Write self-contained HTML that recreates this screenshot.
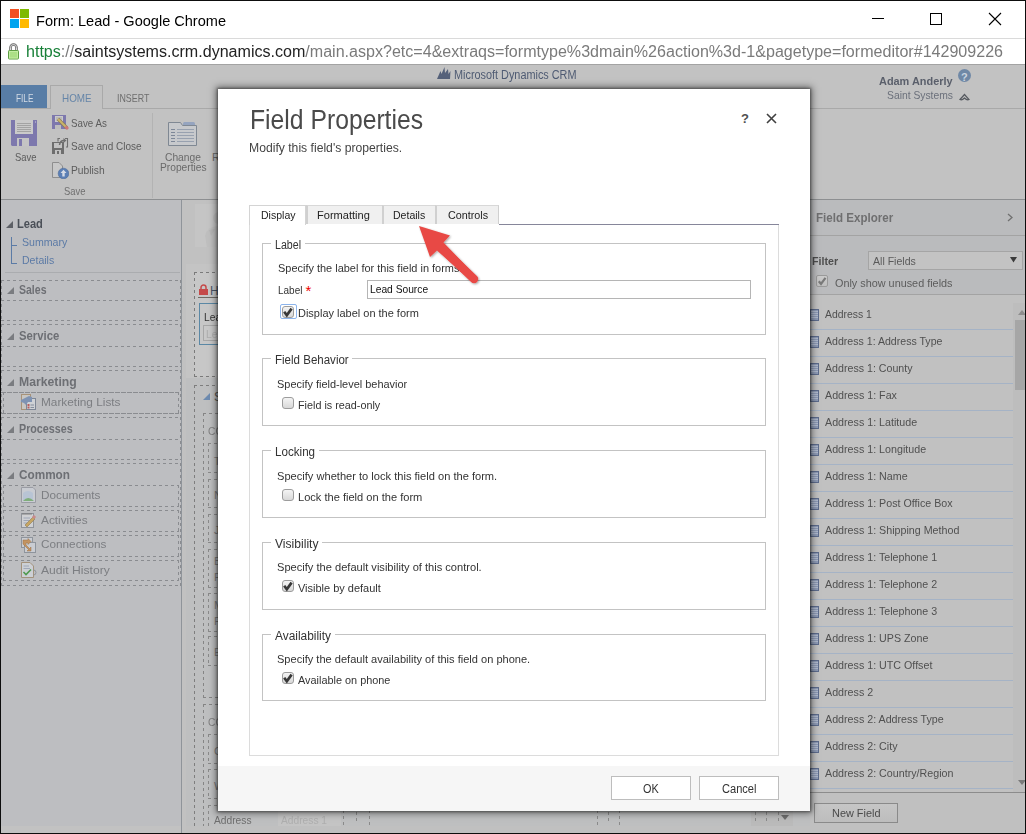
<!DOCTYPE html><html><head><meta charset="utf-8"><style>*{box-sizing:border-box;margin:0;padding:0}html,body{width:1026px;height:834px;overflow:hidden;background:#c2c2c2}body{position:relative;font-family:"Liberation Sans",sans-serif;color:#222}.a{position:absolute}.t{position:absolute;white-space:nowrap;line-height:1}.dl{position:absolute;left:0;top:0;z-index:10}</style></head><body>
<div class="a" style="left:0px;top:0px;width:1026px;height:38px;background:#fff"></div>
<div class="a" style="left:10px;top:9px;width:9px;height:9px;background:#f25022"></div>
<div class="a" style="left:20px;top:9px;width:9px;height:9px;background:#7fba00"></div>
<div class="a" style="left:10px;top:19px;width:9px;height:9px;background:#00a4ef"></div>
<div class="a" style="left:20px;top:19px;width:9px;height:9px;background:#ffb900"></div>
<div class="a" style="left:872px;top:18px;width:12px;height:1px;background:#000"></div>
<div class="a" style="left:930px;top:13px;width:12px;height:12px;border:1px solid #000"></div>
<svg class="a" style="left:988px;top:12px" width="14" height="14"><path d="M1 1L13 13M13 1L1 13" stroke="#000" stroke-width="1.1"/></svg>
<div class="a" style="left:0px;top:38px;width:1026px;height:1px;background:#dadada"></div>
<div class="a" style="left:0px;top:39px;width:1026px;height:25px;background:#fff"></div>
<div class="a" style="left:0px;top:64px;width:1026px;height:1px;background:#a3a3a3"></div>
<svg class="a" style="left:7px;top:43px" width="13" height="17" viewBox="0 0 13 17"><path d="M3.5 7.5V4.5A3 3 0 0 1 9.5 4.5V7.5" fill="none" stroke="#6a6a6a" stroke-width="2.6"/><path d="M3.5 7.5V4.5A3 3 0 0 1 9.5 4.5V7.5" fill="none" stroke="#e8e8e8" stroke-width="0.9"/><rect x="1.5" y="7.5" width="10" height="8.5" rx="0.8" fill="#acdf86" stroke="#5e9e44"/><rect x="2.5" y="8.5" width="8" height="6.5" fill="none" stroke="#c8f0a8" stroke-width="0.8"/></svg>
<div class="a" style="left:1px;top:65px;width:1024px;height:768px;background:#c2c2c2"></div>
<svg class="a" style="left:437px;top:66px" width="14" height="13" viewBox="0 0 14 13"><path d="M0 13 L3.5 5 L4.5 8 L7.5 1 L8 7 L11 3 L11.5 8 L13.5 5 L13 13 Z" fill="#55617a"/></svg>
<div class="a" style="left:958px;top:69px;width:13px;height:13px;border-radius:50%;background:#6f88a6"></div>
<svg class="a" style="left:959px;top:93px" width="11" height="8" viewBox="0 0 11 8"><path d="M1 6.5 L5.5 1.5 L10 6.5 Q8 7.5 5.5 5 Q3 7.5 1 6.5Z" fill="none" stroke="#55595f" stroke-width="1.2"/></svg>
<div class="a" style="left:1px;top:85px;width:46px;height:24px;background:#587da6"></div>
<div class="a" style="left:50px;top:85px;width:53px;height:24px;border:1px solid #a9a9a9;border-bottom:none;background:#c2c2c2;z-index:2"></div>
<div class="a" style="left:1px;top:108px;width:1024px;height:1px;background:#a9a9a9"></div>
<svg class="a" style="left:11px;top:120px" width="27" height="27" viewBox="0 0 27 27"><path d="M0 0H26V26H1L0 25Z" fill="#7d78ad"/><rect x="4" y="0" width="18" height="14" fill="#cacaca"/><path d="M6 3.5H20M6 5.5H20M6 7.5H20M6 9.5H20M6 11.5H20" stroke="#a3a3a3" stroke-width="1"/><rect x="6" y="18" width="12" height="8" fill="#c4c4c4"/><rect x="8" y="19" width="3" height="7" fill="#7d78ad"/><rect x="24" y="1" width="1" height="2" fill="#a7a3c8"/></svg>
<svg class="a" style="left:52px;top:115px" width="17" height="15" viewBox="0 0 17 15"><rect x="0" y="0" width="14" height="14" fill="#7d78ad"/><rect x="3" y="1" width="8" height="6" fill="#cacaca"/><path d="M4 3H10M4 5H10" stroke="#999" stroke-width="0.7"/><rect x="3" y="10" width="6" height="4" fill="#bdbdbd"/><path d="M6 4 L15 13" stroke="#8c7a55" stroke-width="3.2"/><path d="M6 4 L15 13" stroke="#c9b46a" stroke-width="2"/><path d="M13.5 11.5 L16 14" stroke="#c77" stroke-width="3"/></svg>
<svg class="a" style="left:52px;top:137px" width="17" height="18" viewBox="0 0 17 18"><rect x="0" y="5" width="12" height="12" fill="#6e6e6e"/><rect x="2" y="6" width="8" height="5" fill="#c2c2c2"/><rect x="3" y="13" width="6" height="4" fill="#c2c2c2"/><rect x="5" y="14" width="2" height="3" fill="#6e6e6e"/><path d="M6 4.5V1.5H8M13 1.5H15.5V10H14" fill="none" stroke="#6e6e6e" stroke-width="1.1"/><path d="M7.5 8 Q8 3.5 12 3.5" fill="none" stroke="#6e6e6e" stroke-width="1.5"/><path d="M11.5 1 L14.5 3.5 L11.5 6Z" fill="#6e6e6e"/></svg>
<svg class="a" style="left:52px;top:162px" width="17" height="17" viewBox="0 0 17 17"><path d="M0.5 0.5H7L10.5 4V15.5H0.5Z" fill="#c8c8c8" stroke="#8e8e8e"/><circle cx="11.5" cy="11.5" r="5.3" fill="#5b7fb5" stroke="#4a6a9a" stroke-width="0.6"/><path d="M11.5 7.8 L8.5 11 H10.3 V14.5 H12.7 V11 H14.5Z" fill="#d5dbe6"/></svg>
<div class="a" style="left:152px;top:113px;width:1px;height:85px;background:#b3b3b3"></div>
<svg class="a" style="left:167px;top:121px" width="31" height="26" viewBox="0 0 31 26"><rect x="16" y="1" width="12" height="4" rx="1.5" fill="#95a4bf"/><path d="M1.5 1.5 H13.5 L15.5 4.5 H29.5 V24.5 H1.5 Z" fill="#c7c9cc" stroke="#7f8893" stroke-width="1"/><g stroke="#7d8797" stroke-width="1.1"><path d="M4 8.5H8M4 11.5H8M4 14.5H8M4 17.5H8M4 20.5H8"/></g><g stroke="#939cab" stroke-width="0.9"><path d="M10 8.5H27M10 11.5H27M10 14.5H27M10 17.5H27M10 20.5H27"/></g></svg>
<div class="a" style="left:1px;top:199px;width:1024px;height:1px;background:#8d8f91"></div>
<div class="a" style="left:182px;top:200px;width:628px;height:633px;background:#c1c1c1"></div>
<div class="a" style="left:195px;top:204px;width:30px;height:43px;background:#c5c5c5"></div>
<svg class="a" style="left:195px;top:204px" width="30" height="43"><circle cx="24" cy="14" r="6" fill="#bcbcbc"/><path d="M10 32 Q12 22 24 22 Q30 22 30 26 V43 H12Z" fill="#bfbfbf"/><path d="M14 26 L20 25 L16 32Z" fill="#b8b8b8"/></svg>
<div class="a" style="left:186px;top:264px;width:624px;height:114px;background:#c4c4c4"></div>
<div class="a" style="left:194px;top:272px;width:620px;height:104px;background:#c7c7c7"></div>
<div class="a" style="left:194px;top:272px;width:620px;height:1px;background:repeating-linear-gradient(90deg,#7a7a7a 0 3px,transparent 3px 6px)"></div>
<div class="a" style="left:194px;top:376px;width:620px;height:1px;background:repeating-linear-gradient(90deg,#7a7a7a 0 3px,transparent 3px 6px)"></div>
<div class="a" style="left:194px;top:272px;width:1px;height:105px;background:repeating-linear-gradient(180deg,#7a7a7a 0 3px,transparent 3px 6px)"></div>
<svg class="a" style="left:199px;top:284px" width="9" height="11" viewBox="0 0 9 11"><path d="M2 5V3.5A2.5 2.5 0 0 1 7 3.5V5" fill="none" stroke="#c54a4a" stroke-width="1.5"/><rect x="0" y="5" width="9" height="6" fill="#c54a4a"/></svg>
<div class="a" style="left:198px;top:297px;width:620px;height:1px;background:#6e6b64"></div>
<div class="a" style="left:199px;top:303px;width:620px;height:42px;border:1px solid #5b88a5"></div>
<div class="a" style="left:203px;top:325px;width:600px;height:16px;border:1px solid #a7a7a7;background:#c8c8c8"></div>
<div class="a" style="left:186px;top:378px;width:624px;height:448px;background:#bebfc0"></div>
<div class="a" style="left:194px;top:385px;width:620px;height:1px;background:repeating-linear-gradient(90deg,#7e7e7e 0 3px,transparent 3px 6px)"></div>
<div class="a" style="left:194px;top:385px;width:1px;height:441px;background:repeating-linear-gradient(180deg,#7e7e7e 0 3px,transparent 3px 6px)"></div>
<svg class="a" style="left:203px;top:393px" width="7" height="7"><path d="M0 7H7V0Z" fill="#6d8bb0"/></svg>
<div class="a" style="left:203px;top:413px;width:620px;height:1px;background:repeating-linear-gradient(90deg,#858585 0 3px,transparent 3px 6px)"></div>
<div class="a" style="left:203px;top:697px;width:620px;height:1px;background:repeating-linear-gradient(90deg,#858585 0 3px,transparent 3px 6px)"></div>
<div class="a" style="left:203px;top:413px;width:1px;height:285px;background:repeating-linear-gradient(180deg,#858585 0 3px,transparent 3px 6px)"></div>
<div class="a" style="left:203px;top:704px;width:620px;height:1px;background:repeating-linear-gradient(90deg,#858585 0 3px,transparent 3px 6px)"></div>
<div class="a" style="left:203px;top:704px;width:1px;height:122px;background:repeating-linear-gradient(180deg,#858585 0 3px,transparent 3px 6px)"></div>
<div class="a" style="left:186px;top:826px;width:624px;height:7px;background:#c0c0c0"></div>
<div class="a" style="left:208px;top:443px;width:600px;height:1px;background:repeating-linear-gradient(90deg,#8a8a8a 0 3px,transparent 3px 6px)"></div>
<div class="a" style="left:208px;top:472px;width:600px;height:1px;background:repeating-linear-gradient(90deg,#8a8a8a 0 3px,transparent 3px 6px)"></div>
<div class="a" style="left:208px;top:443px;width:1px;height:30px;background:repeating-linear-gradient(180deg,#8a8a8a 0 3px,transparent 3px 6px)"></div>
<div class="a" style="left:807px;top:443px;width:1px;height:30px;background:repeating-linear-gradient(180deg,#8a8a8a 0 3px,transparent 3px 6px)"></div>
<div class="a" style="left:208px;top:479px;width:600px;height:1px;background:repeating-linear-gradient(90deg,#8a8a8a 0 3px,transparent 3px 6px)"></div>
<div class="a" style="left:208px;top:507px;width:600px;height:1px;background:repeating-linear-gradient(90deg,#8a8a8a 0 3px,transparent 3px 6px)"></div>
<div class="a" style="left:208px;top:479px;width:1px;height:29px;background:repeating-linear-gradient(180deg,#8a8a8a 0 3px,transparent 3px 6px)"></div>
<div class="a" style="left:807px;top:479px;width:1px;height:29px;background:repeating-linear-gradient(180deg,#8a8a8a 0 3px,transparent 3px 6px)"></div>
<div class="a" style="left:208px;top:514px;width:600px;height:1px;background:repeating-linear-gradient(90deg,#8a8a8a 0 3px,transparent 3px 6px)"></div>
<div class="a" style="left:208px;top:542px;width:600px;height:1px;background:repeating-linear-gradient(90deg,#8a8a8a 0 3px,transparent 3px 6px)"></div>
<div class="a" style="left:208px;top:514px;width:1px;height:29px;background:repeating-linear-gradient(180deg,#8a8a8a 0 3px,transparent 3px 6px)"></div>
<div class="a" style="left:807px;top:514px;width:1px;height:29px;background:repeating-linear-gradient(180deg,#8a8a8a 0 3px,transparent 3px 6px)"></div>
<div class="a" style="left:208px;top:549px;width:600px;height:1px;background:repeating-linear-gradient(90deg,#8a8a8a 0 3px,transparent 3px 6px)"></div>
<div class="a" style="left:208px;top:587px;width:600px;height:1px;background:repeating-linear-gradient(90deg,#8a8a8a 0 3px,transparent 3px 6px)"></div>
<div class="a" style="left:208px;top:549px;width:1px;height:39px;background:repeating-linear-gradient(180deg,#8a8a8a 0 3px,transparent 3px 6px)"></div>
<div class="a" style="left:807px;top:549px;width:1px;height:39px;background:repeating-linear-gradient(180deg,#8a8a8a 0 3px,transparent 3px 6px)"></div>
<div class="a" style="left:208px;top:593px;width:600px;height:1px;background:repeating-linear-gradient(90deg,#8a8a8a 0 3px,transparent 3px 6px)"></div>
<div class="a" style="left:208px;top:631px;width:600px;height:1px;background:repeating-linear-gradient(90deg,#8a8a8a 0 3px,transparent 3px 6px)"></div>
<div class="a" style="left:208px;top:593px;width:1px;height:39px;background:repeating-linear-gradient(180deg,#8a8a8a 0 3px,transparent 3px 6px)"></div>
<div class="a" style="left:807px;top:593px;width:1px;height:39px;background:repeating-linear-gradient(180deg,#8a8a8a 0 3px,transparent 3px 6px)"></div>
<div class="a" style="left:208px;top:636px;width:600px;height:1px;background:repeating-linear-gradient(90deg,#8a8a8a 0 3px,transparent 3px 6px)"></div>
<div class="a" style="left:208px;top:665px;width:600px;height:1px;background:repeating-linear-gradient(90deg,#8a8a8a 0 3px,transparent 3px 6px)"></div>
<div class="a" style="left:208px;top:636px;width:1px;height:30px;background:repeating-linear-gradient(180deg,#8a8a8a 0 3px,transparent 3px 6px)"></div>
<div class="a" style="left:807px;top:636px;width:1px;height:30px;background:repeating-linear-gradient(180deg,#8a8a8a 0 3px,transparent 3px 6px)"></div>
<div class="a" style="left:208px;top:734px;width:600px;height:1px;background:repeating-linear-gradient(90deg,#8a8a8a 0 3px,transparent 3px 6px)"></div>
<div class="a" style="left:208px;top:763px;width:600px;height:1px;background:repeating-linear-gradient(90deg,#8a8a8a 0 3px,transparent 3px 6px)"></div>
<div class="a" style="left:208px;top:734px;width:1px;height:30px;background:repeating-linear-gradient(180deg,#8a8a8a 0 3px,transparent 3px 6px)"></div>
<div class="a" style="left:807px;top:734px;width:1px;height:30px;background:repeating-linear-gradient(180deg,#8a8a8a 0 3px,transparent 3px 6px)"></div>
<div class="a" style="left:208px;top:769px;width:600px;height:1px;background:repeating-linear-gradient(90deg,#8a8a8a 0 3px,transparent 3px 6px)"></div>
<div class="a" style="left:208px;top:798px;width:600px;height:1px;background:repeating-linear-gradient(90deg,#8a8a8a 0 3px,transparent 3px 6px)"></div>
<div class="a" style="left:208px;top:769px;width:1px;height:30px;background:repeating-linear-gradient(180deg,#8a8a8a 0 3px,transparent 3px 6px)"></div>
<div class="a" style="left:807px;top:769px;width:1px;height:30px;background:repeating-linear-gradient(180deg,#8a8a8a 0 3px,transparent 3px 6px)"></div>
<div class="a" style="left:208px;top:805px;width:600px;height:1px;background:repeating-linear-gradient(90deg,#8a8a8a 0 3px,transparent 3px 6px)"></div>
<div class="a" style="left:208px;top:805px;width:1px;height:22px;background:repeating-linear-gradient(180deg,#8a8a8a 0 3px,transparent 3px 6px)"></div>
<div class="a" style="left:278px;top:810px;width:63px;height:16px;background:#c4c4c4"></div>
<div class="a" style="left:343px;top:810px;width:1px;height:16px;background:repeating-linear-gradient(180deg,#8a8a8a 0 3px,transparent 3px 6px)"></div>
<div class="a" style="left:356px;top:812px;width:1px;height:12px;background:repeating-linear-gradient(180deg,#8a8a8a 0 3px,transparent 3px 6px)"></div>
<div class="a" style="left:369px;top:810px;width:1px;height:16px;background:repeating-linear-gradient(180deg,#8a8a8a 0 3px,transparent 3px 6px)"></div>
<div class="a" style="left:597px;top:810px;width:1px;height:16px;background:repeating-linear-gradient(180deg,#8a8a8a 0 3px,transparent 3px 6px)"></div>
<div class="a" style="left:608px;top:812px;width:1px;height:12px;background:repeating-linear-gradient(180deg,#8a8a8a 0 3px,transparent 3px 6px)"></div>
<div class="a" style="left:619px;top:810px;width:1px;height:16px;background:repeating-linear-gradient(180deg,#8a8a8a 0 3px,transparent 3px 6px)"></div>
<div class="a" style="left:751px;top:810px;width:42px;height:16px;background:#bababa"></div>
<div class="a" style="left:755px;top:812px;width:1px;height:12px;background:repeating-linear-gradient(180deg,#8a8a8a 0 3px,transparent 3px 6px)"></div>
<div class="a" style="left:766px;top:812px;width:1px;height:12px;background:repeating-linear-gradient(180deg,#8a8a8a 0 3px,transparent 3px 6px)"></div>
<div class="a" style="left:778px;top:812px;width:1px;height:12px;background:repeating-linear-gradient(180deg,#8a8a8a 0 3px,transparent 3px 6px)"></div>
<svg class="a" style="left:781px;top:815px" width="8" height="5"><path d="M0 0H8L4 5Z" fill="#6e6e6e"/></svg>
<div class="a" style="left:810px;top:200px;width:215px;height:633px;background:#babbbd"></div>
<svg class="a" style="left:1007px;top:213px" width="6" height="9"><path d="M1 1L5 4.5L1 8" fill="none" stroke="#707070" stroke-width="1.3"/></svg>
<div class="a" style="left:810px;top:235px;width:215px;height:1px;background:#a3a3a3"></div>
<div class="a" style="left:868px;top:251px;width:155px;height:19px;border:1px solid #a5a5a5;background:#c3c3c3"></div>
<svg class="a" style="left:1010px;top:257px" width="7" height="6"><path d="M0 0H7L3.5 5.5Z" fill="#3a3a3a"/></svg>
<div class="a" style="left:816px;top:275px;width:12px;height:12px;border:1px solid #9a9a9a;border-radius:2px;background:linear-gradient(#cbcbcb,#bfbfbf)"></div>
<svg class="a" style="left:817px;top:276px" width="10" height="10"><path d="M1.8 5.2L4 8L8.5 1.8" fill="none" stroke="#7a7a7a" stroke-width="2.2"/></svg>
<div class="a" style="left:810px;top:294px;width:215px;height:1px;background:#a3a3a3"></div>
<div class="a" style="left:810px;top:295px;width:215px;height:497px;background:#c1c1c1"></div>
<div class="a" style="left:1013px;top:303px;width:12px;height:489px;background:#bdbdbd"></div>
<div class="a" style="left:1015px;top:320px;width:10px;height:70px;background:#a6a6a6"></div>
<svg class="a" style="left:1018px;top:310px" width="8" height="5"><path d="M0 5H8L4 0Z" fill="#8e8e8e"/></svg>
<svg class="a" style="left:1018px;top:780px" width="8" height="5"><path d="M0 0H8L4 5Z" fill="#7a7a7a"/></svg>
<div class="a" style="left:810px;top:793px;width:215px;height:40px;background:#c0c0c0"></div>
<div class="a" style="left:810px;top:792px;width:215px;height:1px;background:#8c8c8c"></div>
<div class="a" style="left:814px;top:803px;width:84px;height:20px;border:1px solid #8a8a8a;background:linear-gradient(#c6c6c6,#bdbdbd)"></div>
<svg class="a" style="left:810px;top:309px" width="9" height="12" viewBox="0 0 9 12"><rect x="0.5" y="0.5" width="8" height="11" fill="#8e9bb6" stroke="#5d6c8d"/><path d="M1 2.5H8M1 4.5H8M1 6.5H8M1 8.5H8" stroke="#b0bace" stroke-width="1"/></svg>
<div class="a" style="left:810px;top:329.2px;width:203px;height:1px;background:#a5b3c6"></div>
<svg class="a" style="left:810px;top:336px" width="9" height="12" viewBox="0 0 9 12"><rect x="0.5" y="0.5" width="8" height="11" fill="#8e9bb6" stroke="#5d6c8d"/><path d="M1 2.5H8M1 4.5H8M1 6.5H8M1 8.5H8" stroke="#b0bace" stroke-width="1"/></svg>
<div class="a" style="left:810px;top:356.2px;width:203px;height:1px;background:#a5b3c6"></div>
<svg class="a" style="left:810px;top:363px" width="9" height="12" viewBox="0 0 9 12"><rect x="0.5" y="0.5" width="8" height="11" fill="#8e9bb6" stroke="#5d6c8d"/><path d="M1 2.5H8M1 4.5H8M1 6.5H8M1 8.5H8" stroke="#b0bace" stroke-width="1"/></svg>
<div class="a" style="left:810px;top:383.2px;width:203px;height:1px;background:#a5b3c6"></div>
<svg class="a" style="left:810px;top:390px" width="9" height="12" viewBox="0 0 9 12"><rect x="0.5" y="0.5" width="8" height="11" fill="#8e9bb6" stroke="#5d6c8d"/><path d="M1 2.5H8M1 4.5H8M1 6.5H8M1 8.5H8" stroke="#b0bace" stroke-width="1"/></svg>
<div class="a" style="left:810px;top:410.2px;width:203px;height:1px;background:#a5b3c6"></div>
<svg class="a" style="left:810px;top:417px" width="9" height="12" viewBox="0 0 9 12"><rect x="0.5" y="0.5" width="8" height="11" fill="#8e9bb6" stroke="#5d6c8d"/><path d="M1 2.5H8M1 4.5H8M1 6.5H8M1 8.5H8" stroke="#b0bace" stroke-width="1"/></svg>
<div class="a" style="left:810px;top:437.2px;width:203px;height:1px;background:#a5b3c6"></div>
<svg class="a" style="left:810px;top:444px" width="9" height="12" viewBox="0 0 9 12"><rect x="0.5" y="0.5" width="8" height="11" fill="#8e9bb6" stroke="#5d6c8d"/><path d="M1 2.5H8M1 4.5H8M1 6.5H8M1 8.5H8" stroke="#b0bace" stroke-width="1"/></svg>
<div class="a" style="left:810px;top:464.2px;width:203px;height:1px;background:#a5b3c6"></div>
<svg class="a" style="left:810px;top:471px" width="9" height="12" viewBox="0 0 9 12"><rect x="0.5" y="0.5" width="8" height="11" fill="#8e9bb6" stroke="#5d6c8d"/><path d="M1 2.5H8M1 4.5H8M1 6.5H8M1 8.5H8" stroke="#b0bace" stroke-width="1"/></svg>
<div class="a" style="left:810px;top:491.2px;width:203px;height:1px;background:#a5b3c6"></div>
<svg class="a" style="left:810px;top:498px" width="9" height="12" viewBox="0 0 9 12"><rect x="0.5" y="0.5" width="8" height="11" fill="#8e9bb6" stroke="#5d6c8d"/><path d="M1 2.5H8M1 4.5H8M1 6.5H8M1 8.5H8" stroke="#b0bace" stroke-width="1"/></svg>
<div class="a" style="left:810px;top:518.2px;width:203px;height:1px;background:#a5b3c6"></div>
<svg class="a" style="left:810px;top:525px" width="9" height="12" viewBox="0 0 9 12"><rect x="0.5" y="0.5" width="8" height="11" fill="#8e9bb6" stroke="#5d6c8d"/><path d="M1 2.5H8M1 4.5H8M1 6.5H8M1 8.5H8" stroke="#b0bace" stroke-width="1"/></svg>
<div class="a" style="left:810px;top:545.2px;width:203px;height:1px;background:#a5b3c6"></div>
<svg class="a" style="left:810px;top:552px" width="9" height="12" viewBox="0 0 9 12"><rect x="0.5" y="0.5" width="8" height="11" fill="#8e9bb6" stroke="#5d6c8d"/><path d="M1 2.5H8M1 4.5H8M1 6.5H8M1 8.5H8" stroke="#b0bace" stroke-width="1"/></svg>
<div class="a" style="left:810px;top:572.2px;width:203px;height:1px;background:#a5b3c6"></div>
<svg class="a" style="left:810px;top:579px" width="9" height="12" viewBox="0 0 9 12"><rect x="0.5" y="0.5" width="8" height="11" fill="#8e9bb6" stroke="#5d6c8d"/><path d="M1 2.5H8M1 4.5H8M1 6.5H8M1 8.5H8" stroke="#b0bace" stroke-width="1"/></svg>
<div class="a" style="left:810px;top:599.2px;width:203px;height:1px;background:#a5b3c6"></div>
<svg class="a" style="left:810px;top:606px" width="9" height="12" viewBox="0 0 9 12"><rect x="0.5" y="0.5" width="8" height="11" fill="#8e9bb6" stroke="#5d6c8d"/><path d="M1 2.5H8M1 4.5H8M1 6.5H8M1 8.5H8" stroke="#b0bace" stroke-width="1"/></svg>
<div class="a" style="left:810px;top:626.2px;width:203px;height:1px;background:#a5b3c6"></div>
<svg class="a" style="left:810px;top:633px" width="9" height="12" viewBox="0 0 9 12"><rect x="0.5" y="0.5" width="8" height="11" fill="#8e9bb6" stroke="#5d6c8d"/><path d="M1 2.5H8M1 4.5H8M1 6.5H8M1 8.5H8" stroke="#b0bace" stroke-width="1"/></svg>
<div class="a" style="left:810px;top:653.2px;width:203px;height:1px;background:#a5b3c6"></div>
<svg class="a" style="left:810px;top:660px" width="9" height="12" viewBox="0 0 9 12"><rect x="0.5" y="0.5" width="8" height="11" fill="#8e9bb6" stroke="#5d6c8d"/><path d="M1 2.5H8M1 4.5H8M1 6.5H8M1 8.5H8" stroke="#b0bace" stroke-width="1"/></svg>
<div class="a" style="left:810px;top:680.2px;width:203px;height:1px;background:#a5b3c6"></div>
<svg class="a" style="left:810px;top:687px" width="9" height="12" viewBox="0 0 9 12"><rect x="0.5" y="0.5" width="8" height="11" fill="#8e9bb6" stroke="#5d6c8d"/><path d="M1 2.5H8M1 4.5H8M1 6.5H8M1 8.5H8" stroke="#b0bace" stroke-width="1"/></svg>
<div class="a" style="left:810px;top:707.2px;width:203px;height:1px;background:#a5b3c6"></div>
<svg class="a" style="left:810px;top:714px" width="9" height="12" viewBox="0 0 9 12"><rect x="0.5" y="0.5" width="8" height="11" fill="#8e9bb6" stroke="#5d6c8d"/><path d="M1 2.5H8M1 4.5H8M1 6.5H8M1 8.5H8" stroke="#b0bace" stroke-width="1"/></svg>
<div class="a" style="left:810px;top:734.2px;width:203px;height:1px;background:#a5b3c6"></div>
<svg class="a" style="left:810px;top:741px" width="9" height="12" viewBox="0 0 9 12"><rect x="0.5" y="0.5" width="8" height="11" fill="#8e9bb6" stroke="#5d6c8d"/><path d="M1 2.5H8M1 4.5H8M1 6.5H8M1 8.5H8" stroke="#b0bace" stroke-width="1"/></svg>
<div class="a" style="left:810px;top:761.2px;width:203px;height:1px;background:#a5b3c6"></div>
<svg class="a" style="left:810px;top:768px" width="9" height="12" viewBox="0 0 9 12"><rect x="0.5" y="0.5" width="8" height="11" fill="#8e9bb6" stroke="#5d6c8d"/><path d="M1 2.5H8M1 4.5H8M1 6.5H8M1 8.5H8" stroke="#b0bace" stroke-width="1"/></svg>
<div class="a" style="left:810px;top:788.2px;width:203px;height:1px;background:#a5b3c6"></div>
<div class="a" style="left:1px;top:200px;width:181px;height:626px;background:#bdbec1"></div>
<div class="a" style="left:181px;top:200px;width:1px;height:633px;background:#8f949a"></div>
<svg class="a" style="left:6px;top:221px" width="7" height="7"><path d="M0 7H7V0Z" fill="#5d6066"/></svg>
<div class="a" style="left:11px;top:237px;width:1px;height:27px;background:#5b7ba6"></div>
<div class="a" style="left:11px;top:245px;width:6px;height:1px;background:#5b7ba6"></div>
<div class="a" style="left:11px;top:263px;width:6px;height:1px;background:#5b7ba6"></div>
<div class="a" style="left:5px;top:272px;width:175px;height:1px;background:#aaacaf"></div>
<div class="a" style="left:1px;top:280px;width:180px;height:1px;background:repeating-linear-gradient(90deg,#8a8c90 0 3px,transparent 3px 6px)"></div>
<div class="a" style="left:1px;top:320px;width:180px;height:1px;background:repeating-linear-gradient(90deg,#8a8c90 0 3px,transparent 3px 6px)"></div>
<div class="a" style="left:1px;top:280px;width:1px;height:41px;background:repeating-linear-gradient(180deg,#8a8c90 0 3px,transparent 3px 6px)"></div>
<div class="a" style="left:180px;top:280px;width:1px;height:41px;background:repeating-linear-gradient(180deg,#8a8c90 0 3px,transparent 3px 6px)"></div>
<div class="a" style="left:1px;top:300px;width:180px;height:1px;background:repeating-linear-gradient(90deg,#8a8c90 0 3px,transparent 3px 6px)"></div>
<svg class="a" style="left:7px;top:287px" width="7" height="7"><path d="M0 7H7V0Z" fill="#7a7c80"/></svg>
<div class="a" style="left:1px;top:324px;width:180px;height:1px;background:repeating-linear-gradient(90deg,#8a8c90 0 3px,transparent 3px 6px)"></div>
<div class="a" style="left:1px;top:366px;width:180px;height:1px;background:repeating-linear-gradient(90deg,#8a8c90 0 3px,transparent 3px 6px)"></div>
<div class="a" style="left:1px;top:324px;width:1px;height:43px;background:repeating-linear-gradient(180deg,#8a8c90 0 3px,transparent 3px 6px)"></div>
<div class="a" style="left:180px;top:324px;width:1px;height:43px;background:repeating-linear-gradient(180deg,#8a8c90 0 3px,transparent 3px 6px)"></div>
<div class="a" style="left:1px;top:346px;width:180px;height:1px;background:repeating-linear-gradient(90deg,#8a8c90 0 3px,transparent 3px 6px)"></div>
<svg class="a" style="left:7px;top:333px" width="7" height="7"><path d="M0 7H7V0Z" fill="#7a7c80"/></svg>
<div class="a" style="left:1px;top:370px;width:180px;height:1px;background:repeating-linear-gradient(90deg,#8a8c90 0 3px,transparent 3px 6px)"></div>
<div class="a" style="left:1px;top:413px;width:180px;height:1px;background:repeating-linear-gradient(90deg,#8a8c90 0 3px,transparent 3px 6px)"></div>
<div class="a" style="left:1px;top:370px;width:1px;height:44px;background:repeating-linear-gradient(180deg,#8a8c90 0 3px,transparent 3px 6px)"></div>
<div class="a" style="left:180px;top:370px;width:1px;height:44px;background:repeating-linear-gradient(180deg,#8a8c90 0 3px,transparent 3px 6px)"></div>
<div class="a" style="left:1px;top:392px;width:180px;height:1px;background:repeating-linear-gradient(90deg,#8a8c90 0 3px,transparent 3px 6px)"></div>
<svg class="a" style="left:7px;top:379px" width="7" height="7"><path d="M0 7H7V0Z" fill="#7a7c80"/></svg>
<div class="a" style="left:3px;top:392px;width:176px;height:1px;background:repeating-linear-gradient(90deg,#8a8c90 0 3px,transparent 3px 6px)"></div>
<div class="a" style="left:3px;top:413px;width:176px;height:1px;background:repeating-linear-gradient(90deg,#8a8c90 0 3px,transparent 3px 6px)"></div>
<div class="a" style="left:3px;top:392px;width:1px;height:22px;background:repeating-linear-gradient(180deg,#8a8c90 0 3px,transparent 3px 6px)"></div>
<div class="a" style="left:178px;top:392px;width:1px;height:22px;background:repeating-linear-gradient(180deg,#8a8c90 0 3px,transparent 3px 6px)"></div>
<svg class="a" style="left:20px;top:394px" width="17" height="16" viewBox="0 0 17 16"><rect x="1.5" y="0.5" width="9" height="15" fill="#c8c6c2" stroke="#a89278"/><rect x="6.5" y="4.5" width="9" height="11" fill="#cfd2d6" stroke="#7e8796"/><path d="M1 6 L9 2 L12 3 L12 8 L8 8 L6 11 L4 9 L1 8Z" fill="#7f93b3"/><rect x="7.5" y="10" width="2" height="2" fill="#b85c5c"/><rect x="7.5" y="12.5" width="2" height="2" fill="#b85c5c"/><path d="M10.5 11H14M10.5 13.5H14" stroke="#7e8796" stroke-width="0.9"/></svg>
<div class="a" style="left:1px;top:417px;width:180px;height:1px;background:repeating-linear-gradient(90deg,#8a8c90 0 3px,transparent 3px 6px)"></div>
<div class="a" style="left:1px;top:459px;width:180px;height:1px;background:repeating-linear-gradient(90deg,#8a8c90 0 3px,transparent 3px 6px)"></div>
<div class="a" style="left:1px;top:417px;width:1px;height:43px;background:repeating-linear-gradient(180deg,#8a8c90 0 3px,transparent 3px 6px)"></div>
<div class="a" style="left:180px;top:417px;width:1px;height:43px;background:repeating-linear-gradient(180deg,#8a8c90 0 3px,transparent 3px 6px)"></div>
<div class="a" style="left:1px;top:439px;width:180px;height:1px;background:repeating-linear-gradient(90deg,#8a8c90 0 3px,transparent 3px 6px)"></div>
<svg class="a" style="left:7px;top:426px" width="7" height="7"><path d="M0 7H7V0Z" fill="#7a7c80"/></svg>
<div class="a" style="left:1px;top:463px;width:180px;height:1px;background:repeating-linear-gradient(90deg,#8a8c90 0 3px,transparent 3px 6px)"></div>
<div class="a" style="left:1px;top:585px;width:180px;height:1px;background:repeating-linear-gradient(90deg,#8a8c90 0 3px,transparent 3px 6px)"></div>
<div class="a" style="left:1px;top:463px;width:1px;height:123px;background:repeating-linear-gradient(180deg,#8a8c90 0 3px,transparent 3px 6px)"></div>
<div class="a" style="left:180px;top:463px;width:1px;height:123px;background:repeating-linear-gradient(180deg,#8a8c90 0 3px,transparent 3px 6px)"></div>
<svg class="a" style="left:7px;top:472px" width="7" height="7"><path d="M0 7H7V0Z" fill="#7a7c80"/></svg>
<div class="a" style="left:3px;top:485px;width:176px;height:1px;background:repeating-linear-gradient(90deg,#8a8c90 0 3px,transparent 3px 6px)"></div>
<div class="a" style="left:3px;top:506px;width:176px;height:1px;background:repeating-linear-gradient(90deg,#8a8c90 0 3px,transparent 3px 6px)"></div>
<div class="a" style="left:3px;top:485px;width:1px;height:22px;background:repeating-linear-gradient(180deg,#8a8c90 0 3px,transparent 3px 6px)"></div>
<div class="a" style="left:178px;top:485px;width:1px;height:22px;background:repeating-linear-gradient(180deg,#8a8c90 0 3px,transparent 3px 6px)"></div>
<svg class="a" style="left:20px;top:487px" width="17" height="16" viewBox="0 0 17 16"><path d="M1.5 0.5H13L15.5 3V15.5H1.5Z" fill="#c9ccd2" stroke="#9a9ca4"/><path d="M3 6 Q8 2 13 6 V14 H3Z" fill="#b8c4d4"/><path d="M3 14 Q8 8 14 14Z" fill="#7fae7a"/></svg>
<div class="a" style="left:3px;top:510px;width:176px;height:1px;background:repeating-linear-gradient(90deg,#8a8c90 0 3px,transparent 3px 6px)"></div>
<div class="a" style="left:3px;top:531px;width:176px;height:1px;background:repeating-linear-gradient(90deg,#8a8c90 0 3px,transparent 3px 6px)"></div>
<div class="a" style="left:3px;top:510px;width:1px;height:22px;background:repeating-linear-gradient(180deg,#8a8c90 0 3px,transparent 3px 6px)"></div>
<div class="a" style="left:178px;top:510px;width:1px;height:22px;background:repeating-linear-gradient(180deg,#8a8c90 0 3px,transparent 3px 6px)"></div>
<svg class="a" style="left:20px;top:512.2px" width="17" height="16" viewBox="0 0 17 16"><rect x="1.5" y="1.5" width="12" height="14" fill="#cfd0d3" stroke="#8f939a"/><path d="M3 1V3M5 1V3M7 1V3M9 1V3M11 1V3" stroke="#777" stroke-width="0.9"/><path d="M3.5 6H10M3.5 8.5H9M3.5 11H7" stroke="#9aa3b4" stroke-width="0.9"/><path d="M5 13 L13 5 L15 7 L7 15Z" fill="#c6a562" stroke="#8c7a55" stroke-width="0.6"/><rect x="12.5" y="3.5" width="3" height="3" transform="rotate(45 14 5)" fill="#c98a8a"/></svg>
<div class="a" style="left:3px;top:535px;width:176px;height:1px;background:repeating-linear-gradient(90deg,#8a8c90 0 3px,transparent 3px 6px)"></div>
<div class="a" style="left:3px;top:556px;width:176px;height:1px;background:repeating-linear-gradient(90deg,#8a8c90 0 3px,transparent 3px 6px)"></div>
<div class="a" style="left:3px;top:535px;width:1px;height:22px;background:repeating-linear-gradient(180deg,#8a8c90 0 3px,transparent 3px 6px)"></div>
<div class="a" style="left:178px;top:535px;width:1px;height:22px;background:repeating-linear-gradient(180deg,#8a8c90 0 3px,transparent 3px 6px)"></div>
<svg class="a" style="left:20px;top:536.7px" width="17" height="16" viewBox="0 0 17 16"><rect x="1.5" y="0.5" width="11" height="10" fill="#c9ccd2" stroke="#8e949c"/><rect x="4.5" y="5.5" width="11" height="10" fill="#c9ccd2" stroke="#8e949c"/><path d="M3 3 L8 3 L8 1.5 L11 4.5 L8 7.5 L8 6 L6 6 L6 8 L9.5 11.5 L11 10 L11 14 L7 14 L8.5 12.5 L3 7Z" fill="#c39462" stroke="#9a7048" stroke-width="0.5"/></svg>
<div class="a" style="left:3px;top:560px;width:176px;height:1px;background:repeating-linear-gradient(90deg,#8a8c90 0 3px,transparent 3px 6px)"></div>
<div class="a" style="left:3px;top:580px;width:176px;height:1px;background:repeating-linear-gradient(90deg,#8a8c90 0 3px,transparent 3px 6px)"></div>
<div class="a" style="left:3px;top:560px;width:1px;height:21px;background:repeating-linear-gradient(180deg,#8a8c90 0 3px,transparent 3px 6px)"></div>
<div class="a" style="left:178px;top:560px;width:1px;height:21px;background:repeating-linear-gradient(180deg,#8a8c90 0 3px,transparent 3px 6px)"></div>
<svg class="a" style="left:20px;top:561.9px" width="17" height="16" viewBox="0 0 17 16"><path d="M1.5 0.5H10L13.5 4V15.5H1.5Z" fill="#cdd0d5" stroke="#a3927c"/><path d="M13.5 8 A2 2 0 0 1 13.5 13" fill="none" stroke="#8e949c"/><path d="M3.5 4H9M3.5 6.5H10" stroke="#9aa3b4" stroke-width="0.9"/><path d="M3.5 10 L6 12.5 L11 7.5" fill="none" stroke="#4f9a4f" stroke-width="1.6"/></svg>
<div class="t" id="t0" style="left:36.00px;top:13.05px;font-size:15px;color:#000;transform:scaleX(0.9698);transform-origin:0 0">Form: Lead - Google Chrome</div>
<div class="t" id="t1" style="left:26.00px;top:44.20px;font-size:16px;color:#222;transform:scaleX(1.0037);transform-origin:0 0"><span style="color:#188038">https</span><span style="color:#7a7a7a">://</span><span style="color:#222">saintsystems.crm.dynamics.com</span><span style="color:#7a7a7a">/main.aspx?etc=4&amp;extraqs=formtype%3dmain%26action%3d-1&amp;pagetype=formeditor#142909226</span></div>
<div class="t" id="t2" style="left:453.50px;top:69.30px;font-size:12px;color:#4f5b73;transform:scaleX(0.9050);transform-origin:0 0">Microsoft Dynamics CRM</div>
<div class="t" id="t3" style="left:879.00px;top:75.92px;font-size:11.5px;color:#5a5f6b;font-weight:bold;transform:scaleX(0.9491);transform-origin:0 0">Adam Anderly</div>
<div class="t" id="t4" style="left:961.00px;top:71.65px;font-size:11px;color:#c9d3df;font-weight:bold">?</div>
<div class="t" id="t5" style="left:887.00px;top:90.12px;font-size:11.5px;color:#6b707b;transform:scaleX(0.8980);transform-origin:0 0">Saint Systems</div>
<div class="t" id="t6" style="left:15.60px;top:93.45px;font-size:11px;color:#d4dce6;transform:scaleX(0.7489);transform-origin:0 0">FILE</div>
<div class="t" id="t7" style="left:62.40px;top:93.45px;font-size:11px;color:#6585a8;transform:scaleX(0.8970);transform-origin:0 0;z-index:3">HOME</div>
<div class="t" id="t8" style="left:116.70px;top:93.45px;font-size:11px;color:#6e6e6e;transform:scaleX(0.8047);transform-origin:0 0">INSERT</div>
<div class="t" id="t9" style="left:15.40px;top:152.45px;font-size:11px;color:#5c5c5c;transform:scaleX(0.8573);transform-origin:0 0">Save</div>
<div class="t" id="t10" style="left:71.40px;top:117.65px;font-size:11px;color:#5c5c5c;transform:scaleX(0.8870);transform-origin:0 0">Save As</div>
<div class="t" id="t11" style="left:71.40px;top:141.25px;font-size:11px;color:#5c5c5c;transform:scaleX(0.9077);transform-origin:0 0">Save and Close</div>
<div class="t" id="t12" style="left:71.40px;top:165.25px;font-size:11px;color:#5c5c5c;transform:scaleX(0.9313);transform-origin:0 0">Publish</div>
<div class="t" id="t13" style="left:64.30px;top:186.25px;font-size:11px;color:#707070;transform:scaleX(0.8573);transform-origin:0 0">Save</div>
<div class="t" id="t14" style="left:165.00px;top:152.45px;font-size:11px;color:#6a6a6a;transform:scaleX(0.9313);transform-origin:0 0">Change</div>
<div class="t" id="t15" style="left:159.70px;top:162.05px;font-size:11px;color:#6a6a6a;transform:scaleX(0.9294);transform-origin:0 0">Properties</div>
<div class="t" id="t16" style="left:212.00px;top:152.45px;font-size:11px;color:#6a6a6a">R</div>
<div class="t" id="t17" style="left:210.00px;top:284.80px;font-size:12px;color:#4b5566">H</div>
<div class="t" id="t18" style="left:204.00px;top:311.65px;font-size:11px;color:#333;transform:scaleX(0.9300);transform-origin:0 0">Lea</div>
<div class="t" id="t19" style="left:206.00px;top:328.65px;font-size:11px;color:#adadad;transform:scaleX(0.9300);transform-origin:0 0">Le</div>
<div class="t" id="t20" style="left:214.00px;top:390.80px;font-size:12px;color:#555">S</div>
<div class="t" id="t21" style="left:208.00px;top:425.65px;font-size:11px;color:#808080;transform:scaleX(0.9300);transform-origin:0 0">CO</div>
<div class="t" id="t22" style="left:208.00px;top:716.65px;font-size:11px;color:#808080;transform:scaleX(0.9300);transform-origin:0 0">CO</div>
<div class="t" id="t23" style="left:214.00px;top:455.65px;font-size:11px;color:#7a7a7a">T</div>
<div class="t" id="t24" style="left:214.00px;top:489.65px;font-size:11px;color:#7a7a7a">N</div>
<div class="t" id="t25" style="left:214.00px;top:524.65px;font-size:11px;color:#7a7a7a">J</div>
<div class="t" id="t26" style="left:214.00px;top:555.65px;font-size:11px;color:#7a7a7a">B</div>
<div class="t" id="t27" style="left:214.00px;top:571.65px;font-size:11px;color:#7a7a7a">P</div>
<div class="t" id="t28" style="left:214.00px;top:599.65px;font-size:11px;color:#7a7a7a">M</div>
<div class="t" id="t29" style="left:214.00px;top:615.65px;font-size:11px;color:#7a7a7a">P</div>
<div class="t" id="t30" style="left:214.00px;top:646.65px;font-size:11px;color:#7a7a7a">E</div>
<div class="t" id="t31" style="left:214.00px;top:745.65px;font-size:11px;color:#7a7a7a">C</div>
<div class="t" id="t32" style="left:214.00px;top:780.65px;font-size:11px;color:#7a7a7a">W</div>
<div class="t" id="t33" style="left:213.70px;top:815.05px;font-size:11px;color:#6e6e6e;transform:scaleX(0.9300);transform-origin:0 0">Address</div>
<div class="t" id="t34" style="left:281.00px;top:814.65px;font-size:11px;color:#aeaeae;transform:scaleX(0.9300);transform-origin:0 0">Address 1</div>
<div class="t" id="t35" style="left:816.30px;top:212.18px;font-size:12.5px;color:#6f6f70;font-weight:bold;transform:scaleX(0.9261);transform-origin:0 0">Field Explorer</div>
<div class="t" id="t36" style="left:811.50px;top:256.23px;font-size:11.5px;color:#4e4e4e;font-weight:bold;transform:scaleX(0.9280);transform-origin:0 0">Filter</div>
<div class="t" id="t37" style="left:873.00px;top:256.23px;font-size:11.5px;color:#5a5a5a;transform:scaleX(0.9173);transform-origin:0 0">All Fields</div>
<div class="t" id="t38" style="left:835.30px;top:278.23px;font-size:11.5px;color:#5c5c5c;transform:scaleX(0.9426);transform-origin:0 0">Only show unused fields</div>
<div class="t" id="t39" style="left:831.50px;top:808.23px;font-size:11.5px;color:#4a4a4a;transform:scaleX(0.9484);transform-origin:0 0">New Field</div>
<div class="t" id="t40" style="left:825.30px;top:309.43px;font-size:11.5px;color:#505050;transform:scaleX(0.9057);transform-origin:0 0">Address 1</div>
<div class="t" id="t41" style="left:825.30px;top:336.43px;font-size:11.5px;color:#505050;transform:scaleX(0.9198);transform-origin:0 0">Address 1: Address Type</div>
<div class="t" id="t42" style="left:825.30px;top:363.43px;font-size:11.5px;color:#505050;transform:scaleX(0.9249);transform-origin:0 0">Address 1: County</div>
<div class="t" id="t43" style="left:825.30px;top:390.43px;font-size:11.5px;color:#505050;transform:scaleX(0.9300);transform-origin:0 0">Address 1: Fax</div>
<div class="t" id="t44" style="left:825.30px;top:417.43px;font-size:11.5px;color:#505050;transform:scaleX(0.9300);transform-origin:0 0">Address 1: Latitude</div>
<div class="t" id="t45" style="left:825.30px;top:444.43px;font-size:11.5px;color:#505050;transform:scaleX(0.9300);transform-origin:0 0">Address 1: Longitude</div>
<div class="t" id="t46" style="left:825.30px;top:471.43px;font-size:11.5px;color:#505050;transform:scaleX(0.9300);transform-origin:0 0">Address 1: Name</div>
<div class="t" id="t47" style="left:825.30px;top:498.43px;font-size:11.5px;color:#505050;transform:scaleX(0.9300);transform-origin:0 0">Address 1: Post Office Box</div>
<div class="t" id="t48" style="left:825.30px;top:525.43px;font-size:11.5px;color:#505050;transform:scaleX(0.9300);transform-origin:0 0">Address 1: Shipping Method</div>
<div class="t" id="t49" style="left:825.30px;top:552.43px;font-size:11.5px;color:#505050;transform:scaleX(0.9300);transform-origin:0 0">Address 1: Telephone 1</div>
<div class="t" id="t50" style="left:825.30px;top:579.43px;font-size:11.5px;color:#505050;transform:scaleX(0.9300);transform-origin:0 0">Address 1: Telephone 2</div>
<div class="t" id="t51" style="left:825.30px;top:606.43px;font-size:11.5px;color:#505050;transform:scaleX(0.9300);transform-origin:0 0">Address 1: Telephone 3</div>
<div class="t" id="t52" style="left:825.30px;top:633.43px;font-size:11.5px;color:#505050;transform:scaleX(0.9300);transform-origin:0 0">Address 1: UPS Zone</div>
<div class="t" id="t53" style="left:825.30px;top:660.43px;font-size:11.5px;color:#505050;transform:scaleX(0.9300);transform-origin:0 0">Address 1: UTC Offset</div>
<div class="t" id="t54" style="left:825.30px;top:687.43px;font-size:11.5px;color:#505050;transform:scaleX(0.9300);transform-origin:0 0">Address 2</div>
<div class="t" id="t55" style="left:825.30px;top:714.43px;font-size:11.5px;color:#505050;transform:scaleX(0.9300);transform-origin:0 0">Address 2: Address Type</div>
<div class="t" id="t56" style="left:825.30px;top:741.43px;font-size:11.5px;color:#505050;transform:scaleX(0.9300);transform-origin:0 0">Address 2: City</div>
<div class="t" id="t57" style="left:825.30px;top:768.43px;font-size:11.5px;color:#505050;transform:scaleX(0.9300);transform-origin:0 0">Address 2: Country/Region</div>
<div class="t" id="t58" style="left:17.30px;top:218.40px;font-size:12px;color:#4b5058;font-weight:bold;transform:scaleX(0.9245);transform-origin:0 0">Lead</div>
<div class="t" id="t59" style="left:22.30px;top:237.22px;font-size:11.5px;color:#5b7aa6;transform:scaleX(0.9207);transform-origin:0 0">Summary</div>
<div class="t" id="t60" style="left:22.30px;top:254.53px;font-size:11.5px;color:#5b7aa6;transform:scaleX(0.9159);transform-origin:0 0">Details</div>
<div class="t" id="t61" style="left:18.50px;top:284.30px;font-size:12px;color:#6d6f74;font-weight:bold;transform:scaleX(0.8769);transform-origin:0 0">Sales</div>
<div class="t" id="t62" style="left:18.50px;top:330.30px;font-size:12px;color:#6d6f74;font-weight:bold;transform:scaleX(0.9414);transform-origin:0 0">Service</div>
<div class="t" id="t63" style="left:18.50px;top:376.20px;font-size:12px;color:#6d6f74;font-weight:bold;transform:scaleX(1.0179);transform-origin:0 0">Marketing</div>
<div class="t" id="t64" style="left:41.30px;top:396.83px;font-size:11.5px;color:#7c7e82;transform:scaleX(1.0279);transform-origin:0 0">Marketing Lists</div>
<div class="t" id="t65" style="left:18.50px;top:423.20px;font-size:12px;color:#6d6f74;font-weight:bold;transform:scaleX(0.8926);transform-origin:0 0">Processes</div>
<div class="t" id="t66" style="left:18.50px;top:469.20px;font-size:12px;color:#6d6f74;font-weight:bold;transform:scaleX(0.9808);transform-origin:0 0">Common</div>
<div class="t" id="t67" style="left:41.30px;top:489.73px;font-size:11.5px;color:#7c7e82;transform:scaleX(1.0211);transform-origin:0 0">Documents</div>
<div class="t" id="t68" style="left:41.30px;top:514.93px;font-size:11.5px;color:#7c7e82;transform:scaleX(1.0270);transform-origin:0 0">Activities</div>
<div class="t" id="t69" style="left:41.30px;top:539.43px;font-size:11.5px;color:#7c7e82;transform:scaleX(1.0229);transform-origin:0 0">Connections</div>
<div class="t" id="t70" style="left:41.30px;top:564.62px;font-size:11.5px;color:#7c7e82;transform:scaleX(1.0554);transform-origin:0 0">Audit History</div>
<div class="dl">
<div class="a" style="left:218px;top:89px;width:592px;height:722px;background:#fff;box-shadow:0 0 2px 1px rgba(0,0,0,0.35),0 0 7px 2px rgba(0,0,0,0.5)"></div>
<svg class="a" style="left:766px;top:113px" width="11" height="11"><path d="M1 1L10 10M10 1L1 10" stroke="#404040" stroke-width="1.6"/></svg>
<div class="a" style="left:249px;top:205px;width:57px;height:20px;border:1px solid #d4d4d4;border-bottom:none;background:#fff"></div>
<div class="a" style="left:306px;top:205px;width:76px;height:19px;border-top:1px solid #d8d8d8;border-left:2px solid #d0d0d0;background:#f0f0f0"></div>
<div class="a" style="left:382px;top:205px;width:53px;height:19px;border-top:1px solid #d8d8d8;border-left:2px solid #d0d0d0;background:#f0f0f0"></div>
<div class="a" style="left:435px;top:205px;width:64px;height:19px;border-top:1px solid #d8d8d8;border-left:2px solid #d0d0d0;border-right:1px solid #d0d0d0;background:#f0f0f0"></div>
<div class="a" style="left:499px;top:224px;width:280px;height:1px;background:#86869a"></div>
<div class="a" style="left:249px;top:225px;width:530px;height:531px;border:1px solid #dcdcdc;border-top:none"></div>
<div class="a" style="left:262px;top:243px;width:504px;height:92px;border:1px solid #c3c3c3"></div>
<div class="a" style="left:271px;top:240px;width:33.5px;height:6px;background:#fff"></div>
<div class="a" style="left:262px;top:358px;width:504px;height:68px;border:1px solid #c3c3c3"></div>
<div class="a" style="left:271px;top:355px;width:81.2px;height:6px;background:#fff"></div>
<div class="a" style="left:262px;top:450px;width:504px;height:68px;border:1px solid #c3c3c3"></div>
<div class="a" style="left:271px;top:447px;width:47.6px;height:6px;background:#fff"></div>
<div class="a" style="left:262px;top:542px;width:504px;height:68px;border:1px solid #c3c3c3"></div>
<div class="a" style="left:271px;top:539px;width:51px;height:6px;background:#fff"></div>
<div class="a" style="left:262px;top:634px;width:504px;height:67px;border:1px solid #c3c3c3"></div>
<div class="a" style="left:271px;top:631px;width:63.5px;height:6px;background:#fff"></div>
<div class="a" style="left:367px;top:280px;width:384px;height:19px;border:1px solid #b5b5b5"></div>
<div class="a" style="left:280px;top:304px;width:17px;height:15px;border:1px solid #8cb4ec;border-radius:2px"></div>
<div class="a" style="left:282px;top:306px;width:12px;height:12px;border:1px solid #9c9c9c;border-radius:3px;background:linear-gradient(#f4f4f4,#d8d8d8)"></div>
<svg class="a" style="left:282px;top:306px" width="12" height="12"><path d="M2.2 5.8L4.8 9.2L9.6 2.6" fill="none" stroke="#383838" stroke-width="2.7"/></svg>
<div class="a" style="left:282px;top:397px;width:12px;height:12px;border:1px solid #9c9c9c;border-radius:3px;background:linear-gradient(#f4f4f4,#d8d8d8)"></div>
<div class="a" style="left:282px;top:489px;width:12px;height:12px;border:1px solid #9c9c9c;border-radius:3px;background:linear-gradient(#f4f4f4,#d8d8d8)"></div>
<div class="a" style="left:282px;top:580px;width:12px;height:12px;border:1px solid #9c9c9c;border-radius:3px;background:linear-gradient(#f4f4f4,#d8d8d8)"></div>
<svg class="a" style="left:282px;top:580px" width="12" height="12"><path d="M2.2 5.8L4.8 9.2L9.6 2.6" fill="none" stroke="#383838" stroke-width="2.7"/></svg>
<div class="a" style="left:282px;top:672px;width:12px;height:12px;border:1px solid #9c9c9c;border-radius:3px;background:linear-gradient(#f4f4f4,#d8d8d8)"></div>
<svg class="a" style="left:282px;top:672px" width="12" height="12"><path d="M2.2 5.8L4.8 9.2L9.6 2.6" fill="none" stroke="#383838" stroke-width="2.7"/></svg>
<div class="a" style="left:218px;top:766px;width:592px;height:45px;background:#f6f6f6"></div>
<div class="a" style="left:611px;top:776px;width:80px;height:24px;border:1px solid #bdbdbd;background:#fff"></div>
<div class="a" style="left:699px;top:776px;width:80px;height:24px;border:1px solid #bdbdbd;background:#fff"></div>
<div class="t" id="t71" style="left:249.90px;top:107.15px;font-size:27px;color:#4a4a4a;font-weight:300;transform:scaleX(0.9154);transform-origin:0 0;z-index:11">Field Properties</div>
<div class="t" id="t72" style="left:249.30px;top:141.80px;font-size:12px;color:#444;transform:scaleX(1.0144);transform-origin:0 0;z-index:11">Modify this field's properties.</div>
<div class="t" id="t73" style="left:741.00px;top:112.45px;font-size:13px;color:#505050;font-weight:bold;z-index:11">?</div>
<div class="t" id="t74" style="left:260.50px;top:210.22px;font-size:11.5px;color:#222;transform:scaleX(0.9147);transform-origin:0 0;z-index:11">Display</div>
<div class="t" id="t75" style="left:317.40px;top:210.22px;font-size:11.5px;color:#222;transform:scaleX(0.9605);transform-origin:0 0;z-index:11">Formatting</div>
<div class="t" id="t76" style="left:393.10px;top:210.22px;font-size:11.5px;color:#222;transform:scaleX(0.9159);transform-origin:0 0;z-index:11">Details</div>
<div class="t" id="t77" style="left:447.80px;top:210.22px;font-size:11.5px;color:#222;transform:scaleX(0.9363);transform-origin:0 0;z-index:11">Controls</div>
<div class="t" id="t78" style="left:274.50px;top:238.80px;font-size:12px;color:#333;transform:scaleX(0.8851);transform-origin:0 0;z-index:11">Label</div>
<div class="t" id="t79" style="left:274.50px;top:353.80px;font-size:12px;color:#333;transform:scaleX(0.9607);transform-origin:0 0;z-index:11">Field Behavior</div>
<div class="t" id="t80" style="left:274.50px;top:445.80px;font-size:12px;color:#333;transform:scaleX(0.9692);transform-origin:0 0;z-index:11">Locking</div>
<div class="t" id="t81" style="left:274.50px;top:537.80px;font-size:12px;color:#333;transform:scaleX(1.0087);transform-origin:0 0;z-index:11">Visibility</div>
<div class="t" id="t82" style="left:274.50px;top:629.80px;font-size:12px;color:#333;transform:scaleX(0.9914);transform-origin:0 0;z-index:11">Availability</div>
<div class="t" id="t83" style="left:277.50px;top:263.43px;font-size:11.5px;color:#333;transform:scaleX(0.9526);transform-origin:0 0;z-index:11">Specify the label for this field in forms.</div>
<div class="t" id="t84" style="left:277.50px;top:284.83px;font-size:11.5px;color:#333;transform:scaleX(0.8671);transform-origin:0 0;z-index:11">Label</div>
<div class="t" id="t85" style="left:305.50px;top:283.25px;font-size:15px;color:#e00;z-index:11">*</div>
<div class="t" id="t86" style="left:369.50px;top:284.23px;font-size:11.5px;color:#111;transform:scaleX(0.8908);transform-origin:0 0;z-index:11">Lead Source</div>
<div class="t" id="t87" style="left:297.50px;top:307.62px;font-size:11.5px;color:#333;transform:scaleX(0.9545);transform-origin:0 0;z-index:11">Display label on the form</div>
<div class="t" id="t88" style="left:277.10px;top:379.23px;font-size:11.5px;color:#333;transform:scaleX(0.9518);transform-origin:0 0;z-index:11">Specify field-level behavior</div>
<div class="t" id="t89" style="left:297.60px;top:399.83px;font-size:11.5px;color:#333;transform:scaleX(0.9386);transform-origin:0 0;z-index:11">Field is read-only</div>
<div class="t" id="t90" style="left:277.10px;top:471.23px;font-size:11.5px;color:#333;transform:scaleX(0.9649);transform-origin:0 0;z-index:11">Specify whether to lock this field on the form.</div>
<div class="t" id="t91" style="left:297.60px;top:491.83px;font-size:11.5px;color:#333;transform:scaleX(0.9625);transform-origin:0 0;z-index:11">Lock the field on the form</div>
<div class="t" id="t92" style="left:277.30px;top:562.23px;font-size:11.5px;color:#333;transform:scaleX(0.9646);transform-origin:0 0;z-index:11">Specify the default visibility of this control.</div>
<div class="t" id="t93" style="left:297.70px;top:583.23px;font-size:11.5px;color:#333;transform:scaleX(0.9546);transform-origin:0 0;z-index:11">Visible by default</div>
<div class="t" id="t94" style="left:277.30px;top:654.23px;font-size:11.5px;color:#333;transform:scaleX(0.9613);transform-origin:0 0;z-index:11">Specify the default availability of this field on phone.</div>
<div class="t" id="t95" style="left:297.70px;top:675.23px;font-size:11.5px;color:#333;transform:scaleX(0.9465);transform-origin:0 0;z-index:11">Available on phone</div>
<div class="t" id="t96" style="left:643.30px;top:782.80px;font-size:12px;color:#333;transform:scaleX(0.9052);transform-origin:0 0;z-index:11">OK</div>
<div class="t" id="t97" style="left:721.70px;top:782.80px;font-size:12px;color:#333;transform:scaleX(0.9235);transform-origin:0 0;z-index:11">Cancel</div>
</div>
<svg class="a" style="left:0;top:0;z-index:20" width="1026" height="834"><defs><filter id="sh" x="-20%" y="-20%" width="140%" height="140%"><feDropShadow dx="1" dy="1" stdDeviation="1.2" flood-color="#000" flood-opacity="0.35"/></filter></defs>
<g filter="url(#sh)" fill="#e84a45"><path d="M419 226 L450 235.5 L443.5 242.5 L476 276 L471 281 L437 250.5 L430 257 Z"/><line x1="440" y1="246.5" x2="474" y2="279" stroke="#e84a45" stroke-width="8.5" stroke-linecap="round"/></g></svg>
<div class="a" style="left:0;top:0;width:1026px;height:834px;border:1px solid #0d0d0d;z-index:50"></div>
</body></html>
